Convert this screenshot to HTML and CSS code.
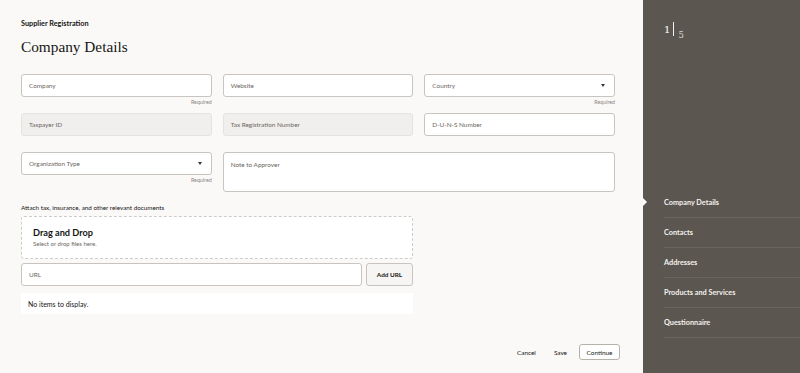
FILE: index.html
```html
<!DOCTYPE html>
<html lang="en">
<head>
<meta charset="utf-8">
<title>Supplier Registration</title>
<link rel="stylesheet" href="styles.css">
</head>
<body>
<div class="page">
  <main class="main">
    <div class="crumb">Supplier Registration</div>
    <h1 class="title">Company Details</h1>

    <div class="grid">
      <div class="field">
        <div class="input">Company</div>
        <div class="help">Required</div>
      </div>
      <div class="field">
        <div class="input">Website</div>
        <div class="help"></div>
      </div>
      <div class="field">
        <div class="input select">Country<span class="caret"></span></div>
        <div class="help">Required</div>
      </div>

      <div class="field">
        <div class="input disabled">Taxpayer ID</div>
        <div class="help"></div>
      </div>
      <div class="field">
        <div class="input disabled">Tax Registration Number</div>
        <div class="help"></div>
      </div>
      <div class="field">
        <div class="input">D-U-N-S Number</div>
        <div class="help"></div>
      </div>

      <div class="field">
        <div class="input select">Organization Type<span class="caret"></span></div>
        <div class="help">Required</div>
      </div>
      <div class="field span2">
        <div class="input textarea">Note to Approver</div>
      </div>
    </div>

    <div class="attach">
      <div class="attach-label">Attach tax, insurance, and other relevant documents</div>
      <div class="dropzone">
        <div class="dz-title">Drag and Drop</div>
        <div class="dz-sub">Select or drop files here.</div>
      </div>
      <div class="url-row">
        <div class="input url">URL</div>
        <button class="btn add">Add URL</button>
      </div>
      <div class="empty">No items to display.</div>
    </div>

    <div class="footer">
      <button class="btn text">Cancel</button>
      <button class="btn text">Save</button>
      <button class="btn outline">Continue</button>
    </div>
  </main>

  <aside class="side">
    <div class="steps">
      <span class="cur">1</span><span class="bar"></span><span class="tot">5</span>
    </div>
    <nav class="nav">
      <div class="nav-item active">Company Details</div>
      <div class="nav-item">Contacts</div>
      <div class="nav-item">Addresses</div>
      <div class="nav-item">Products and Services</div>
      <div class="nav-item">Questionnaire</div>
    </nav>
  </aside>
</div>
</body>
</html>
```

FILE: styles.css
```css
* { box-sizing: border-box; }
html, body { margin: 0; padding: 0; }
body {
  font-family: Lato, "Noto Sans", "Liberation Sans", sans-serif;
  color: #161513;
  background: #faf9f8;
}
.page {
  display: flex;
  width: 800px;
  height: 373px;
  overflow: hidden;
}
.main {
  width: 643px;
  flex: none;
  display: flex;
  flex-direction: column;
  padding: 19px 28px 13px 21px;
}
.crumb {
  font-size: 7.3px;
  font-weight: 700;
  line-height: 10px;
}
.title {
  font-family: "Liberation Serif", "DejaVu Serif", serif;
  font-weight: 400;
  font-size: 15.3px;
  line-height: 20px;
  margin: 8px 0 0 0;
  color: #161513;
}
.grid {
  margin-top: 17px;
  display: grid;
  grid-template-columns: repeat(3, 1fr);
  column-gap: 11px;
}
.span2 { grid-column: span 2; }
.input {
  height: 23px;
  border: 1px solid #c8c4bf;
  border-radius: 3px;
  background: #fff;
  font-size: 6.4px;
  color: #6b6661;
  display: flex;
  align-items: center;
  padding: 0 7px;
  position: relative;
}
.input.disabled {
  background: #f1efed;
  border-color: #e6e3df;
}
.input.textarea {
  height: 40px;
  align-items: flex-start;
  padding-top: 8px;
}
.select { justify-content: space-between; padding-right: 9px; }
.caret {
  width: 0; height: 0;
  border-left: 2.5px solid transparent;
  border-right: 2.5px solid transparent;
  border-top: 3px solid #3a3632;
}
.help {
  height: 16px;
  font-size: 5.3px;
  color: #8a857f;
  text-align: right;
  padding-top: 2px;
  line-height: 6px;
}
.attach {
  width: 392px;
  margin-top: 11px;
}
.attach-label {
  font-size: 6.3px;
  line-height: 10px;
  margin-bottom: 3px;
}
.dropzone {
  height: 43px;
  border: 1px dashed #cfcbc6;
  border-radius: 3px;
  background: #fff;
  padding: 9px 11px 0;
}
.dz-title {
  font-size: 9.2px;
  font-weight: 700;
  line-height: 13px;
}
.dz-sub {
  font-size: 6px;
  color: #6b6661;
  line-height: 8px;
  margin-top: 1px;
}
.url-row {
  margin-top: 4px;
  display: flex;
  gap: 4px;
}
.url-row .url { flex: 1; }
.btn {
  font-family: inherit;
  font-size: 6.4px;
  color: #161513;
  cursor: pointer;
}
.btn.add {
  width: 47px;
  height: 23px;
  border: 1px solid #c8c4bf;
  border-radius: 3px;
  background: #f6f5f3;
  font-weight: 700;
  padding: 0;
}
.empty {
  margin-top: 7px;
  height: 21px;
  background: #fff;
  font-size: 7px;
  display: flex;
  align-items: center;
  padding-left: 7px;
}
.footer {
  margin-top: auto;
  margin-right: -5px;
  display: flex;
  justify-content: flex-end;
  align-items: center;
  gap: 6px;
}
.btn.text {
  background: none;
  border: none;
  height: 16px;
  padding: 0 6px;
}
.btn.outline {
  height: 16px;
  width: 41px;
  padding: 0;
  background: #fff;
  border: 1px solid #b7b2ac;
  border-radius: 3px;
}
.side {
  flex: 1;
  background: #5c5650;
  color: #f3f1ee;
  padding: 22px 0 0 21px;
  display: flex;
  flex-direction: column;
}
.steps {
  display: flex;
  align-items: flex-start;
  height: 16px;
  font-family: "DejaVu Serif", serif;
}
.cur {
  font-size: 10px;
  line-height: 10px;
  margin-top: 3px;
  color: #fff;
}
.bar {
  width: 1px;
  height: 14px;
  background: #f3f1ee;
  margin: 0 4px 0 3px;
}
.tot {
  font-size: 8.5px;
  line-height: 8px;
  margin-top: 9px;
  color: #d9d5d0;
}
.nav {
  margin-top: 150px;
}
.nav-item {
  height: 30px;
  display: flex;
  align-items: center;
  font-size: 7.3px;
  font-weight: 700;
  border-bottom: 1px solid rgba(255,255,255,0.09);
  position: relative;
}
.nav-item.active::before {
  content: "";
  position: absolute;
  left: -21px;
  top: 50%;
  margin-top: -4.5px;
  border-top: 4.5px solid transparent;
  border-bottom: 4.5px solid transparent;
  border-left: 4.5px solid #fff;
}
```
